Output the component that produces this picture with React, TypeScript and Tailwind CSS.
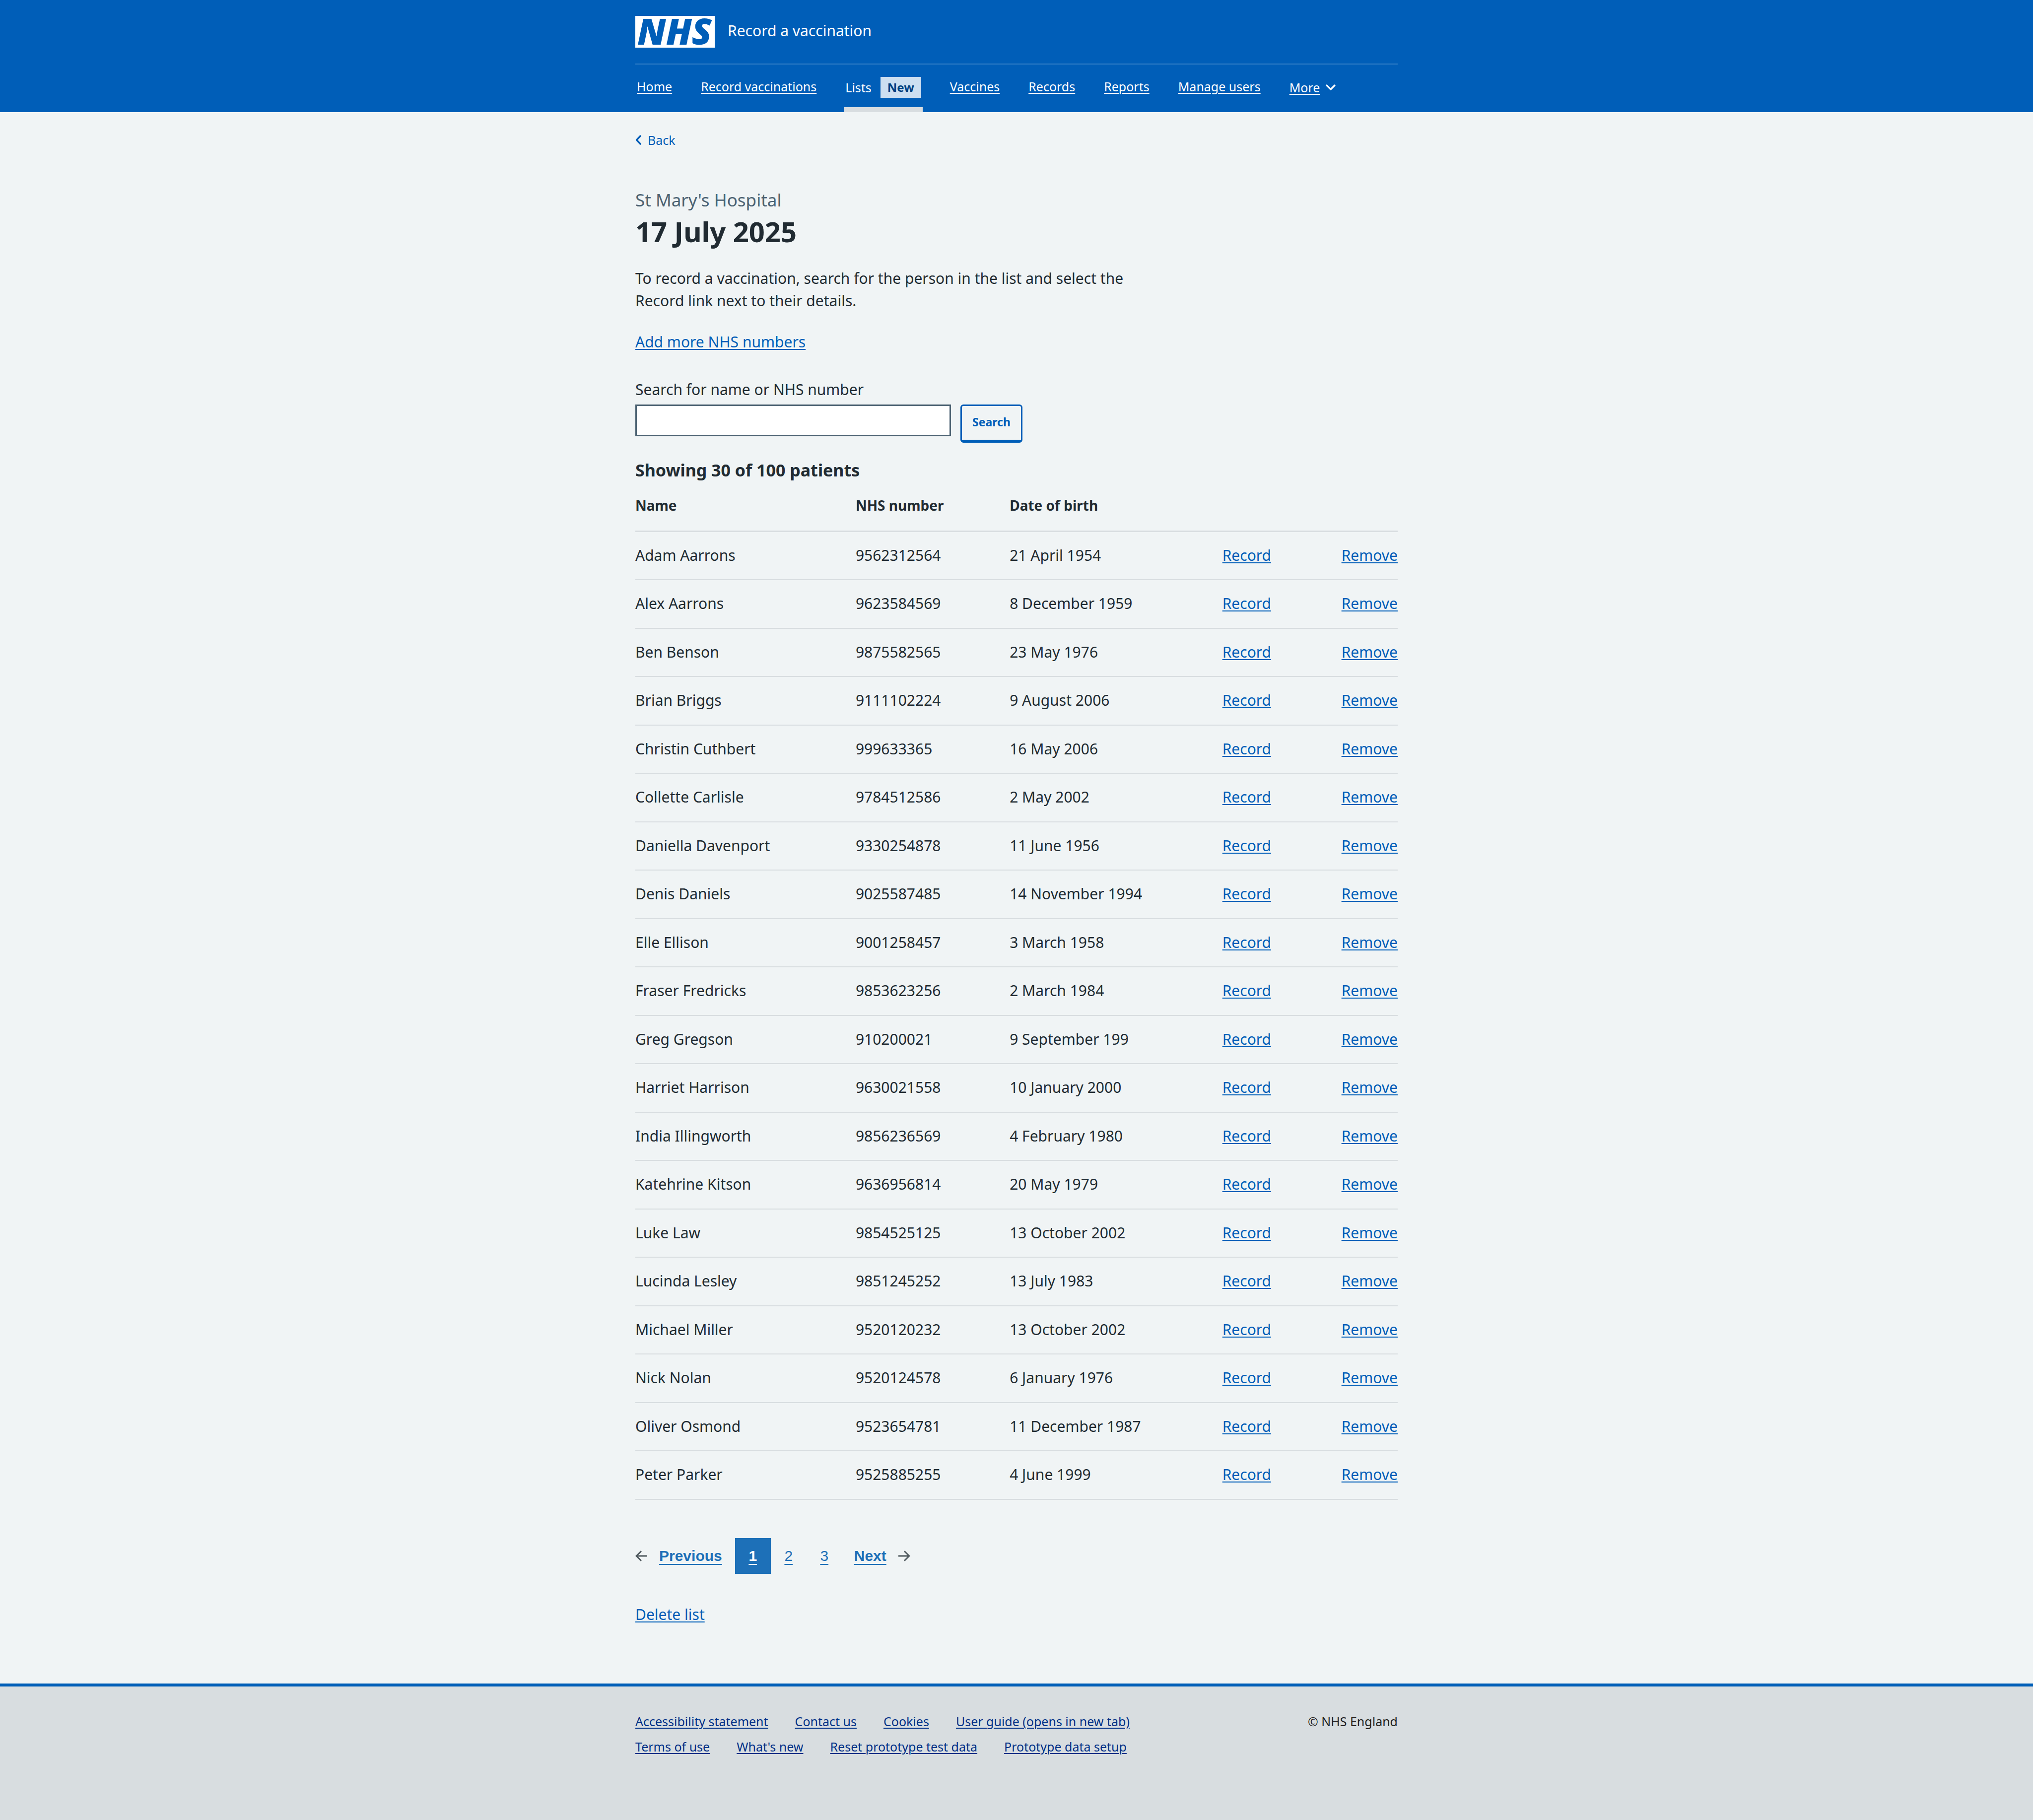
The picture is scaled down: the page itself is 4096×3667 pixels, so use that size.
import React from "react";

type Patient = { name: string; nhs: string; dob: string };

const patients: Patient[] = [
  { name: "Adam Aarrons", nhs: "9562312564", dob: "21 April 1954" },
  { name: "Alex Aarrons", nhs: "9623584569", dob: "8 December 1959" },
  { name: "Ben Benson", nhs: "9875582565", dob: "23 May 1976" },
  { name: "Brian Briggs", nhs: "9111102224", dob: "9 August 2006" },
  { name: "Christin Cuthbert", nhs: "999633365", dob: "16 May 2006" },
  { name: "Collette Carlisle", nhs: "9784512586", dob: "2 May 2002" },
  { name: "Daniella Davenport", nhs: "9330254878", dob: "11 June 1956" },
  { name: "Denis Daniels", nhs: "9025587485", dob: "14 November 1994" },
  { name: "Elle Ellison", nhs: "9001258457", dob: "3 March 1958" },
  { name: "Fraser Fredricks", nhs: "9853623256", dob: "2 March 1984" },
  { name: "Greg Gregson", nhs: "910200021", dob: "9 September 199" },
  { name: "Harriet Harrison", nhs: "9630021558", dob: "10 January 2000" },
  { name: "India Illingworth", nhs: "9856236569", dob: "4 February 1980" },
  { name: "Katehrine Kitson", nhs: "9636956814", dob: "20 May 1979" },
  { name: "Luke Law", nhs: "9854525125", dob: "13 October 2002" },
  { name: "Lucinda Lesley", nhs: "9851245252", dob: "13 July 1983" },
  { name: "Michael Miller", nhs: "9520120232", dob: "13 October 2002" },
  { name: "Nick Nolan", nhs: "9520124578", dob: "6 January 1976" },
  { name: "Oliver Osmond", nhs: "9523654781", dob: "11 December 1987" },
  { name: "Peter Parker", nhs: "9525885255", dob: "4 June 1999" },
];

const footerLinks = [
  "Accessibility statement",
  "Contact us",
  "Cookies",
  "User guide (opens in new tab)",
  "Terms of use",
  "What's new",
  "Reset prototype test data",
  "Prototype data setup",
];

function NhsLogo() {
  return (
    <svg className="h-16 w-40 shrink-0 overflow-visible bg-white" viewBox="0 0 160 64" role="img" aria-label="NHS">
      <text
        x="4"
        y="58"
        className="fill-[#005eb8] font-['Open_Sans',sans-serif] text-[73px] font-extrabold italic"
      >
        NHS
      </text>
    </svg>
  );
}

function NavLink({ children }: { children: string }) {
  return (
    <li className="px-[3px] leading-[38px]">
      <a href="#" className="underline decoration-2 underline-offset-[3px]">
        {children}
      </a>
    </li>
  );
}

function Header() {
  return (
    <header className="bg-[#005eb8] text-white">
      <div className="mx-auto w-full max-w-[1536px]">
        <div className="flex items-start gap-[26px] py-8">
          <NhsLogo />
          <span className="text-[30px] leading-[60px]">Record a vaccination</span>
        </div>
        <nav className="border-t-2 border-[#337ec6]" aria-label="Main">
          <ul className="flex h-24 items-start gap-[52px] pt-[25px] text-[25px]">
            <NavLink>Home</NavLink>
            <NavLink>Record vaccinations</NavLink>
            <li className="flex h-full border-b-10 border-[#d8dde0] px-[3px]">
              <a href="#" aria-current="page" className="flex h-[42px] items-center gap-[18px] leading-[42px]">
                Lists
                <strong className="bg-[#ccdff1] px-[14px] text-[24px] font-bold text-[#004281]">New</strong>
              </a>
            </li>
            <NavLink>Vaccines</NavLink>
            <NavLink>Records</NavLink>
            <NavLink>Reports</NavLink>
            <NavLink>Manage users</NavLink>
            <li className="px-[3px]">
              <button type="button" className="flex items-center gap-3 leading-[42px]">
                <span className="underline decoration-2 underline-offset-[3px]">More</span>
                <svg className="h-3 w-5" viewBox="0 0 20 12" fill="none" stroke="currentColor" strokeWidth="3.2" strokeLinecap="round" strokeLinejoin="round">
                  <path d="M2 2l8 8 8-8" />
                </svg>
              </button>
            </li>
          </ul>
        </nav>
      </div>
    </header>
  );
}

function Arrow({ direction }: { direction: "left" | "right" }) {
  return (
    <svg className="h-[22px] w-6" viewBox="0 0 24 22" fill="none" stroke="#505a5f" strokeWidth="3">
      {direction === "left" ? <path d="M24 11H2.5M12 1.2L2.2 11l9.8 9.8" /> : <path d="M0 11h21.5M12 1.2l9.8 9.8-9.8 9.8" />}
    </svg>
  );
}

function Pagination() {
  return (
    <nav
      aria-label="Pagination"
      className="mt-[77px] flex items-center font-['Liberation_Sans',Arial,sans-serif] text-[30px] leading-9 text-[#1d70b8]"
    >
      <a href="#" className="flex items-center gap-6 pr-[26px] font-bold">
        <Arrow direction="left" />
        <span className="underline decoration-2 underline-offset-[6px]">Previous</span>
      </a>
      <a
        href="#"
        aria-current="page"
        className="flex size-[72px] items-center justify-center bg-[#1d70b8] font-bold text-white underline decoration-2 underline-offset-[6px]"
      >
        1
      </a>
      <a href="#" className="flex size-[72px] items-center justify-center underline decoration-2 underline-offset-[6px]">
        2
      </a>
      <a href="#" className="flex size-[72px] items-center justify-center underline decoration-2 underline-offset-[6px]">
        3
      </a>
      <a href="#" className="flex items-center gap-6 pl-6 font-bold">
        <span className="underline decoration-2 underline-offset-[6px]">Next</span>
        <Arrow direction="right" />
      </a>
    </nav>
  );
}

function TextLink({ children }: { children: string }) {
  return (
    <a href="#" className="text-[#005eb8] underline decoration-2 underline-offset-[3px]">
      {children}
    </a>
  );
}

function PatientTable() {
  return (
    <table className="w-full table-fixed border-collapse text-left leading-[45px]">
      <thead className="text-[28px]">
        <tr className="border-b-3 border-[#d8dde0]">
          <th scope="col" className="w-[28.9%] pt-6 pb-7 font-bold">Name</th>
          <th scope="col" className="w-[20.2%] pt-6 pb-7 font-bold">NHS number</th>
          <th scope="col" className="w-[27.9%] pt-6 pb-7 font-bold">Date of birth</th>
          <td />
          <td />
        </tr>
      </thead>
      <tbody>
        {patients.map((p) => (
          <tr
            key={p.nhs}
            className="border-b-2 border-[#d8dde0] [&>td]:pt-6 [&>td]:pb-[26px] even:[&>td]:pb-[27px]"
          >
            <td>{p.name}</td>
            <td>{p.nhs}</td>
            <td>{p.dob}</td>
            <td>
              <TextLink>Record</TextLink>
            </td>
            <td className="text-right">
              <TextLink>Remove</TextLink>
            </td>
          </tr>
        ))}
      </tbody>
    </table>
  );
}

export default function App() {
  return (
    <div className="flex min-h-screen flex-col bg-[#f0f4f5] font-['Noto_Sans',sans-serif] text-[30px] leading-[45px] text-[#212b32]">
      <Header />
      <div className="mx-auto w-full max-w-[1536px] pb-[117px]">
        <a href="#" className="mt-9 flex w-fit items-center gap-[13px] text-[25px] leading-10 text-[#005eb8]">
          <svg className="h-5 w-3" viewBox="0 0 12 20" fill="none" stroke="currentColor" strokeWidth="3.4" strokeLinecap="round" strokeLinejoin="round">
            <path d="M10.2 2L2.6 10l7.6 8" />
          </svg>
          Back
        </a>

        <main className="mt-[76px]">
          <h1>
            <span className="block text-[35px] leading-[50px] text-[#4c6272]">St Mary's Hospital</span>
            <span className="block text-[56px] leading-[76px] font-bold">17 July 2025</span>
          </h1>
          <p className="mt-[34px] max-w-[1024px]">
            To record a vaccination, search for the person in the list and select the Record link next to their details.
          </p>
          <p className="mt-[38px]">
            <TextLink>Add more NHS numbers</TextLink>
          </p>

          <form className="mt-[51px]" onSubmit={(e) => e.preventDefault()}>
            <label htmlFor="search" className="block">
              Search for name or NHS number
            </label>
            <div className="mt-2 flex items-start gap-[19px]">
              <input
                id="search"
                type="text"
                className="h-16 w-[636px] border-3 border-[#4c6272] bg-white px-3 text-[30px]"
              />
              <button
                type="submit"
                className="h-[77px] w-[125px] rounded-[6px] border-3 border-b-6 border-[#005eb8] pb-1 text-[23px] font-bold text-[#005eb8]"
              >
                Search
              </button>
            </div>
          </form>

          <h2 className="mt-[30px] text-[34px] leading-[50px] font-bold">Showing 30 of 100 patients</h2>
          <PatientTable />
          <Pagination />
          <p className="mt-[59px]">
            <TextLink>Delete list</TextLink>
          </p>
        </main>
      </div>

      <footer className="flex-1 border-t-6 border-[#005eb8] bg-[#d8dde0] pt-[45px] text-[25px] leading-[51px]">
        <div className="mx-auto flex w-full max-w-[1536px] justify-between">
          <ul className="flex w-3/4 flex-wrap gap-x-[54px]">
            {footerLinks.map((label) => (
              <li key={label}>
                <a href="#" className="text-[#003087] underline decoration-2 underline-offset-[3px]">
                  {label}
                </a>
              </li>
            ))}
          </ul>
          <p className="text-[#231f20]">© NHS England</p>
        </div>
      </footer>
    </div>
  );
}
